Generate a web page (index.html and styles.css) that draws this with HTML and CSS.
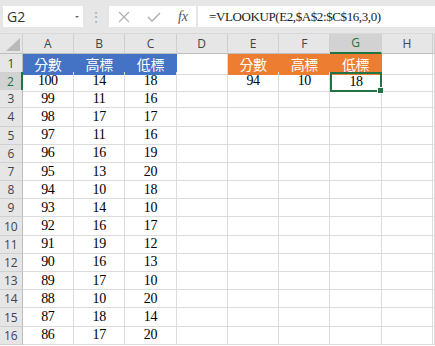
FILE: index.html
```html
<!DOCTYPE html>
<html lang="zh-TW">

<head>
    <meta charset="UTF-8">
    <title>VLOOKUP</title>
    <link rel="stylesheet" href="styles.css">
</head>

<body>

    <!-- Barra de fórmula -->
    <div class="toolbar">
        <div class="namebox">
            <span>G2</span>
            <span class="caret"></span>
        </div>
        <div class="grip">⋮</div>
        <div class="fbtns">
            <svg width="14" height="14" viewBox="0 0 14 14"><path d="M2 2 L12 12 M12 2 L2 12" stroke="#b4b4b4" stroke-width="1.3" fill="none"/></svg>
            <svg width="16" height="14" viewBox="0 0 16 14"><path d="M2 7 L6 11 L14 3" stroke="#b4b4b4" stroke-width="1.6" fill="none"/></svg>
            <span class="fx">fx</span>
        </div>
        <div class="formula">=VLOOKUP(E2,$A$2:$C$16,3,0)</div>
    </div>

    <!-- Planilha -->
    <div class="sheet">
        <div class="row head">
            <div class="corner"><span class="tri"></span></div>
            <div class="col">A</div><div class="col">B</div><div class="col">C</div><div class="col">D</div>
            <div class="col">E</div><div class="col">F</div><div class="col active">G</div><div class="col">H</div><div class="col"></div>
        </div>
        <div class="row">
            <div class="num">1</div>
            <div class="c blue">分數</div><div class="c blue">高標</div><div class="c blue">低標</div><div class="c"></div>
            <div class="c orange">分數</div><div class="c orange">高標</div><div class="c orange">低標</div><div class="c"></div><div class="c"></div>
        </div>
        <div class="row">
            <div class="num active">2</div>
            <div class="c">100</div><div class="c">14</div><div class="c">18</div><div class="c"></div>
            <div class="c">94</div><div class="c">10</div><div class="c sel">18</div><div class="c"></div><div class="c"></div>
        </div>
        <div class="row">
            <div class="num">3</div>
            <div class="c">99</div><div class="c">11</div><div class="c">16</div><div class="c"></div>
            <div class="c"></div><div class="c"></div><div class="c"></div><div class="c"></div><div class="c"></div>
        </div>
        <div class="row">
            <div class="num">4</div>
            <div class="c">98</div><div class="c">17</div><div class="c">17</div><div class="c"></div>
            <div class="c"></div><div class="c"></div><div class="c"></div><div class="c"></div><div class="c"></div>
        </div>
        <div class="row">
            <div class="num">5</div>
            <div class="c">97</div><div class="c">11</div><div class="c">16</div><div class="c"></div>
            <div class="c"></div><div class="c"></div><div class="c"></div><div class="c"></div><div class="c"></div>
        </div>
        <div class="row">
            <div class="num">6</div>
            <div class="c">96</div><div class="c">16</div><div class="c">19</div><div class="c"></div>
            <div class="c"></div><div class="c"></div><div class="c"></div><div class="c"></div><div class="c"></div>
        </div>
        <div class="row">
            <div class="num">7</div>
            <div class="c">95</div><div class="c">13</div><div class="c">20</div><div class="c"></div>
            <div class="c"></div><div class="c"></div><div class="c"></div><div class="c"></div><div class="c"></div>
        </div>
        <div class="row">
            <div class="num">8</div>
            <div class="c">94</div><div class="c">10</div><div class="c">18</div><div class="c"></div>
            <div class="c"></div><div class="c"></div><div class="c"></div><div class="c"></div><div class="c"></div>
        </div>
        <div class="row">
            <div class="num">9</div>
            <div class="c">93</div><div class="c">14</div><div class="c">10</div><div class="c"></div>
            <div class="c"></div><div class="c"></div><div class="c"></div><div class="c"></div><div class="c"></div>
        </div>
        <div class="row">
            <div class="num">10</div>
            <div class="c">92</div><div class="c">16</div><div class="c">17</div><div class="c"></div>
            <div class="c"></div><div class="c"></div><div class="c"></div><div class="c"></div><div class="c"></div>
        </div>
        <div class="row">
            <div class="num">11</div>
            <div class="c">91</div><div class="c">19</div><div class="c">12</div><div class="c"></div>
            <div class="c"></div><div class="c"></div><div class="c"></div><div class="c"></div><div class="c"></div>
        </div>
        <div class="row">
            <div class="num">12</div>
            <div class="c">90</div><div class="c">16</div><div class="c">13</div><div class="c"></div>
            <div class="c"></div><div class="c"></div><div class="c"></div><div class="c"></div><div class="c"></div>
        </div>
        <div class="row">
            <div class="num">13</div>
            <div class="c">89</div><div class="c">17</div><div class="c">10</div><div class="c"></div>
            <div class="c"></div><div class="c"></div><div class="c"></div><div class="c"></div><div class="c"></div>
        </div>
        <div class="row">
            <div class="num">14</div>
            <div class="c">88</div><div class="c">10</div><div class="c">20</div><div class="c"></div>
            <div class="c"></div><div class="c"></div><div class="c"></div><div class="c"></div><div class="c"></div>
        </div>
        <div class="row">
            <div class="num">15</div>
            <div class="c">87</div><div class="c">18</div><div class="c">14</div><div class="c"></div>
            <div class="c"></div><div class="c"></div><div class="c"></div><div class="c"></div><div class="c"></div>
        </div>
        <div class="row">
            <div class="num">16</div>
            <div class="c">86</div><div class="c">17</div><div class="c">20</div><div class="c"></div>
            <div class="c"></div><div class="c"></div><div class="c"></div><div class="c"></div><div class="c"></div>
        </div>
    </div>

</body>

</html>
```

FILE: styles.css
```css
* {
    margin: 0;
    padding: 0;
    box-sizing: border-box;
}

body {
    font-family: "Open Sans", Arial, sans-serif;
    background-color: #fff;
    color: #000;
    width: 435px;
    height: 346px;
    overflow: hidden;
}

/* Barra de fórmula */
.toolbar {
    height: 34px;
    background-color: #e6e6e6;
    display: flex;
    align-items: center;
    padding-left: 3px;
    border-bottom: 1px solid #dadada;
}

.namebox {
    width: 80px;
    height: 21px;
    background-color: #fff;
    display: flex;
    align-items: center;
    justify-content: space-between;
    padding: 0 4px 0 4px;
    font-size: 14px;
    color: #333;
}

.caret {
    width: 0;
    height: 0;
    border-left: 2px solid transparent;
    border-right: 2px solid transparent;
    border-top: 2px solid #666;
}

.grip {
    width: 26px;
    text-align: center;
    color: #b0b0b0;
    font-size: 14px;
}

.fbtns {
    width: 87px;
    height: 21px;
    background-color: #fff;
    display: flex;
    align-items: center;
    justify-content: space-between;
    padding: 0 8px 0 8px;
}

.fx {
    font-family: "Liberation Serif", serif;
    font-style: italic;
    font-size: 14px;
    color: #555;
}

.formula {
    flex: 1;
    height: 21px;
    margin-left: 2px;
    background-color: #fff;
    display: flex;
    align-items: center;
    padding-left: 11px;
    font-family: "Liberation Serif", "Noto Sans CJK TC", serif;
    font-size: 13px;
    letter-spacing: -0.4px;
    color: #222;
}

/* Planilha */
.row {
    display: grid;
    grid-template-columns: 22.7px repeat(8, 51.3px) 1fr;
    height: 18.2px;
}

.row.head {
    height: 19.8px;
    background-color: #e6e6e6;
}

.corner {
    position: relative;
    border-right: 1px solid #cfcfcf;
    border-bottom: 1px solid #bdbdbd;
}

.corner .tri {
    position: absolute;
    right: 2px;
    bottom: 2px;
    width: 0;
    height: 0;
    border-left: 14px solid transparent;
    border-bottom: 13px solid #b9b9b9;
}

.col {
    display: flex;
    align-items: center;
    justify-content: center;
    font-size: 12px;
    color: #444;
    border-right: 1px solid #cfcfcf;
    border-bottom: 1px solid #bdbdbd;
}

.col.active {
    background-color: #d2d2d2;
    color: #217346;
    border-bottom: 2px solid #217346;
}

.num {
    display: flex;
    align-items: center;
    justify-content: center;
    font-size: 12px;
    color: #444;
    background-color: #e6e6e6;
    border-right: 1px solid #bdbdbd;
    border-bottom: 1px solid #d0d0d0;
}

.num.active {
    background-color: #d2d2d2;
    color: #217346;
    border-right: 2px solid #217346;
}

.c {
    display: flex;
    align-items: center;
    justify-content: center;
    font-family: "Liberation Serif", "Noto Sans CJK TC", serif;
    font-size: 14px;
    letter-spacing: -0.4px;
    border-right: 1px solid #dcdcdc;
    border-bottom: 1px solid #dcdcdc;
}

.c.blue {
    background-color: #4472c4;
    border-color: #4472c4;
    color: #fff;
}

.c.orange {
    background-color: #ed7d31;
    border-color: #ed7d31;
    color: #fff;
}

.c.sel {
    position: relative;
    border: 2px solid #217346;
}

.c.sel::after {
    content: "";
    position: absolute;
    right: -4px;
    bottom: -4px;
    width: 5px;
    height: 5px;
    background-color: #217346;
    border: 1px solid #fff;
}
```
